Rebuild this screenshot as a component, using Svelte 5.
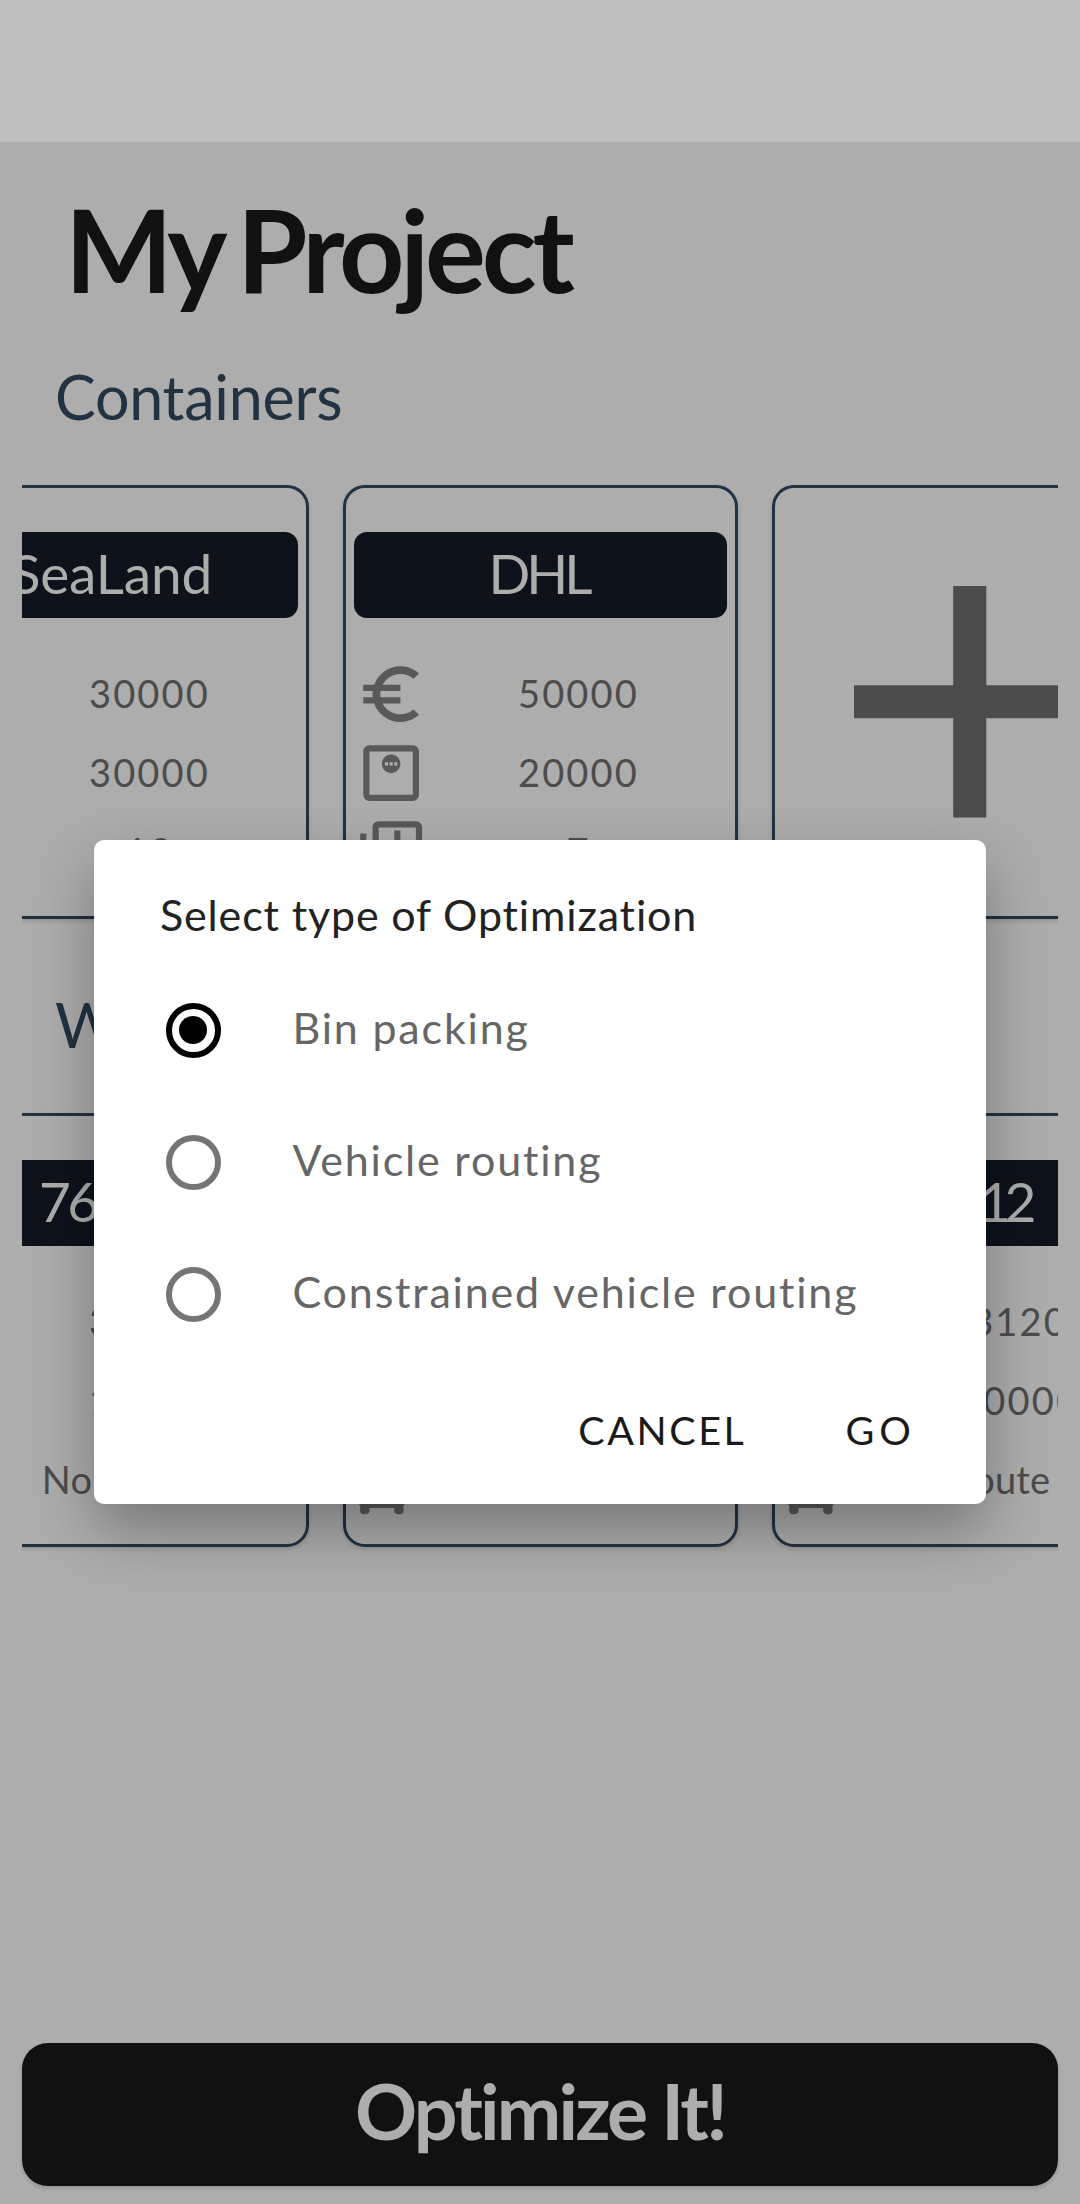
<script>
  const containers = [
    { name: 'SeaLand', tracking: -0.2, values: ['30000', '30000', '12'] },
    { name: 'DHL', tracking: -4, values: ['50000', '20000', '7'] },
  ];

  const wares = [
    { name: '76120', tracking: -3.6, values: ['31200', '10000', 'No route'] },
    { name: '53110', tracking: -3.6, values: ['42000', '20000', 'No route'] },
    { name: '53112', tracking: -6.4, values: ['53120', '100000', 'No route'] },
  ];

  const containerIcons = ['euro', 'weight', 'amount'];
  const wareIcons = ['amount', 'weight', 'route'];

  const options = ['Bin packing', 'Vehicle routing', 'Constrained vehicle routing'];
  let selected = $state(0);
</script>

{#snippet icon(kind)}
  <svg class="icon" viewBox="0 0 24 24" aria-hidden="true">
    {#if kind === 'euro'}
      <path d="M15 18.5c-2.51 0-4.68-1.42-5.76-3.5H15v-2H8.58c-.05-.33-.08-.66-.08-1s.03-.67.08-1H15V9H9.24C10.32 6.92 12.5 5.5 15 5.5c1.61 0 3.09.59 4.23 1.57L21 5.3C19.41 3.87 17.3 3 15 3c-3.92 0-7.24 2.51-8.48 6H3v2h3.06c-.04.33-.06.66-.06 1s.02.67.06 1H3v2h3.52c1.24 3.49 4.56 6 8.48 6 2.31 0 4.41-.87 6-2.3l-1.78-1.77c-1.13.98-2.6 1.57-4.22 1.57z" />
    {:else if kind === 'weight'}
      <path fill-rule="evenodd" d="M19 3H5c-1.1 0-2 .9-2 2v14c0 1.1.9 2 2 2h14c1.1 0 2-.9 2-2V5c0-1.1-.9-2-2-2zm0 16H5V5h14v14z" />
      <path fill-rule="evenodd" d="M12 12c1.66 0 3-1.34 3-3s-1.34-3-3-3-3 1.34-3 3 1.34 3 3 3zM10 8.5h1v1h-1zM11.5 8.5h1v1h-1zM13 8.5h1v1h-1z" />
    {:else if kind === 'amount'}
      <path fill-rule="evenodd" d="M4 6H2v14c0 1.1.9 2 2 2h14v-2H4V6zm16-4H8c-1.1 0-2 .9-2 2v12c0 1.1.9 2 2 2h12c1.1 0 2-.9 2-2V4c0-1.1-.9-2-2-2zm0 14H8V4h12v12zM13 14h2v-3h3V9h-3V5h-2v4h-3v2h3z" />
    {:else}
      <path fill-rule="evenodd" d="M16 1c-2.4 0-4.52 1.21-5.78 3.05C9.84 4 9.42 4 9 4c-4.42 0-8 .5-8 4v10c0 .88.39 1.67 1 2.22V22c0 .55.45 1 1 1h1c.55 0 1-.45 1-1v-1h8v1c0 .55.45 1 1 1h1c.55 0 1-.45 1-1v-1.78c.61-.55 1-1.34 1-2.22v-3.08c3.39-.49 6-3.39 6-6.92 0-3.87-3.13-7-7-7zM4.5 19a1.5 1.5 0 1 1 0-3 1.5 1.5 0 0 1 0 3zM3 13V8h6c0 1.96.74 3.73 1.95 5zm10.5 6a1.5 1.5 0 1 1 0-3 1.5 1.5 0 0 1 0 3zM16 13a5 5 0 1 1 0-10 5 5 0 0 1 0 10z" />
    {/if}
  </svg>
{/snippet}

{#snippet card(item, icons)}
  <article class="card">
    <h3 class="name" style="--tracking: {item.tracking}px">{item.name}</h3>
    {#each item.values as value, i}
      <div class="row">
        {@render icon(icons[i])}
        <span class="value" class:wide={value === 'No route'}>{value}</span>
      </div>
    {/each}
  </article>
{/snippet}

<div class="screen">
  <div class="status"></div>
  <h1 class="title">My Project</h1>

  <h2 class="section first">Containers</h2>
  <div class="strip">
    {#each containers as item}
      {@render card(item, containerIcons)}
    {/each}
    <article class="card add">
      <svg class="plus" viewBox="0 0 14 14" aria-label="Add container"><path d="M14 8H8v6H6V8H0V6h6V0h2v6h6z" /></svg>
    </article>
  </div>

  <h2 class="section second">Wares</h2>
  <div class="strip">
    {#each wares as item}
      {@render card(item, wareIcons)}
    {/each}
  </div>

  <button class="optimize">Optimize It!</button>

  <div class="dialog" role="dialog" aria-label="Select type of Optimization">
    <h2 class="question">Select type of Optimization</h2>
    <div class="options">
      {#each options as option, i}
        <button class="option" role="radio" aria-checked={selected === i} onclick={() => (selected = i)}>
          <span class="radio" class:on={selected === i}></span>
          <span class="label">{option}</span>
        </button>
      {/each}
    </div>
    <div class="actions">
      <button class="action">CANCEL</button>
      <button class="action go">GO</button>
    </div>
  </div>
</div>

<style>
  :global(body) {
    margin: 0;
    background: #adadad;
  }

  .screen {
    position: relative;
    display: flex;
    flex-direction: column;
    box-sizing: border-box;
    width: 1080px;
    height: 2204px;
    padding-bottom: 18px;
    overflow: hidden;
    background: #adadad;
    color: #4c4c4c;
    font-family: Lato, 'Liberation Sans', sans-serif;
  }

  h1, h2, h3 {
    margin: 0;
    font-weight: 400;
    white-space: nowrap;
  }

  button {
    border: 0;
    padding: 0;
    background: none;
    color: inherit;
    font: inherit;
  }

  .status {
    flex: none;
    height: 142px;
    background: #bfbfbf;
  }

  .title {
    margin: 47px 0 0 65px;
    color: #111;
    font-size: 114px;
    font-weight: 700;
    line-height: 120px;
    letter-spacing: -4.2px;
    word-spacing: -7px;
  }

  .section {
    margin-left: 55px;
    color: #213242;
    font-size: 61px;
    line-height: 70px;
    letter-spacing: -0.25px;
  }

  .first { margin-top: 53px; }
  .second { margin-top: 71px; }

  .strip {
    display: flex;
    gap: 34px;
    margin: 53px 22px 0;
    overflow-x: clip;
  }

  .card {
    flex: none;
    box-sizing: border-box;
    width: 395px;
    height: 434px;
    border: 3px solid #213242;
    border-radius: 22px;
    box-shadow: 0 2px 4px rgba(0, 0, 0, 0.14);
  }

  .card:first-child { margin-left: -108px; }

  .add {
    display: grid;
    place-items: center;
  }

  .plus {
    width: 231.5px;
    height: 231.5px;
    fill: #4c4c4c;
  }

  .name {
    box-sizing: border-box;
    height: 86px;
    margin: 44px 8px 37px;
    padding-bottom: 5px;
    border-radius: 13px;
    background: #0d121b;
    color: #adadad;
    font-size: 55px;
    line-height: 82px;
    letter-spacing: var(--tracking);
    text-align: center;
    text-indent: var(--tracking);
  }

  .row {
    display: grid;
    grid-template-columns: 74px 315px;
    align-items: center;
    height: 79px;
  }

  .icon {
    width: 74.25px;
    height: 74.25px;
    margin-left: 8px;
    fill: #595959;
  }

  .value {
    padding-bottom: 3px;
    font-size: 38px;
    line-height: 46px;
    letter-spacing: 2.2px;
    text-align: center;
    text-indent: 2px;
  }

  .wide {
    padding-right: 65px;
    letter-spacing: 0.15px;
  }

  .optimize {
    flex: none;
    height: 143px;
    margin: auto 22px 0;
    padding-bottom: 9px;
    border-radius: 26px;
    background: #111;
    box-shadow: 0 2px 4px rgba(0, 0, 0, 0.16);
    color: #adadad;
    font-size: 77px;
    font-weight: 700;
    letter-spacing: -2.8px;
  }

  .dialog {
    position: absolute;
    top: 840px;
    left: 94px;
    box-sizing: border-box;
    width: 892px;
    height: 664px;
    padding: 45px 70px 0 66px;
    border-radius: 10px;
    background: #fff;
    box-shadow: 0 26px 60px rgba(0, 0, 0, 0.31);
  }

  .question {
    color: #222;
    font-size: 43px;
    line-height: 60px;
    letter-spacing: 0.85px;
  }

  .options {
    display: flex;
    flex-direction: column;
    margin-top: 19px;
  }

  .option {
    display: flex;
    align-items: center;
    gap: 72px;
    height: 132px;
    padding-left: 5.5px;
    color: #666;
    font-size: 43px;
    letter-spacing: 1.82px;
  }

  .radio {
    display: grid;
    place-items: center;
    box-sizing: border-box;
    width: 55px;
    height: 55px;
    border: 6px solid #757575;
    border-radius: 50%;
  }

  .on { border-color: #000; }

  .on::after {
    width: 28px;
    height: 28px;
    border-radius: 50%;
    background: #000;
    content: '';
  }

  .label { padding-bottom: 5px; }

  .actions {
    display: flex;
    justify-content: flex-end;
    gap: 99px;
    margin-top: 40px;
    color: #1a1a1a;
  }

  .action {
    font-size: 39.5px;
    line-height: 60px;
    letter-spacing: 2.6px;
  }

  .go { letter-spacing: 5px; }
</style>
